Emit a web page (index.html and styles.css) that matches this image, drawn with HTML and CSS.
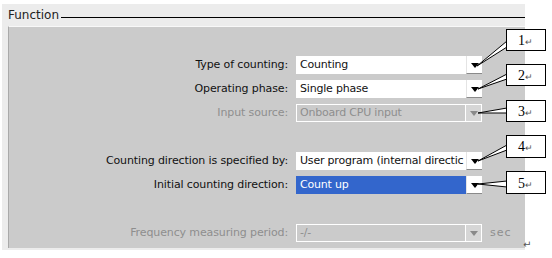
FILE: index.html
```html
<!DOCTYPE html>
<html lang="en">
<head>
    <meta charset="UTF-8">
    <title>Function</title>
    <link rel="stylesheet" href="styles.css">
</head>
<body>

    <div class="panel">
        <div class="panel-head">
            <span class="panel-title">Function</span>
            <span class="panel-rule"></span>
        </div>
        <div class="panel-body">
            <div class="form">
                <label>Type of counting:</label>
                <div class="combo"><span class="combo-text">Counting</span><span class="combo-btn"></span></div>
                <span></span>

                <label>Operating phase:</label>
                <div class="combo"><span class="combo-text">Single phase</span><span class="combo-btn"></span></div>
                <span></span>

                <label class="off">Input source:</label>
                <div class="combo off"><span class="combo-text">Onboard CPU input</span><span class="combo-btn"></span></div>
                <span></span>

                <div class="spacer"></div>

                <label>Counting direction is specified by:</label>
                <div class="combo"><span class="combo-text">User program (internal directic</span><span class="combo-btn"></span></div>
                <span></span>

                <label>Initial counting direction:</label>
                <div class="combo sel"><span class="combo-text">Count up</span><span class="combo-btn"></span></div>
                <span></span>

                <div class="spacer"></div>

                <label class="off">Frequency measuring period:</label>
                <div class="combo off"><span class="combo-text">-/-</span><span class="combo-btn"></span></div>
                <span class="unit">sec</span>
            </div>
        </div>
    </div>

    <span class="para-mark">&#8629;</span>

    <!-- numbered callouts drawn over the form -->
    <svg class="callouts" width="552" height="258" viewBox="0 0 552 258">
        <g fill="#fff" stroke="#000" stroke-width="1">
            <polygon points="507,41 477,66 507,47"/>
            <rect x="506.5" y="29.5" width="39" height="21"/>
            <polygon points="507,74 478,89 507,79"/>
            <rect x="506.5" y="64.5" width="39" height="21"/>
            <polygon points="507,108 478,113 507,113"/>
            <rect x="506.5" y="100.5" width="39" height="21"/>
            <polygon points="507,145 478,161 507,150"/>
            <rect x="506.5" y="135.5" width="39" height="22"/>
            <polygon points="507,181 478,184 507,187"/>
            <rect x="506.5" y="171.5" width="39" height="22"/>
        </g>
        <g class="callout-num">
            <text x="518" y="45">1<tspan class="ret">&#8629;</tspan></text>
            <text x="518" y="80">2<tspan class="ret">&#8629;</tspan></text>
            <text x="518" y="116">3<tspan class="ret">&#8629;</tspan></text>
            <text x="518" y="151">4<tspan class="ret">&#8629;</tspan></text>
            <text x="518" y="188">5<tspan class="ret">&#8629;</tspan></text>
        </g>
    </svg>

</body>
</html>
```

FILE: styles.css
```css
html, body {
    margin: 0;
    padding: 0;
    background: #fff;
    font-family: "DejaVu Sans", sans-serif;
    overflow: hidden;
}
.panel {
    margin: 4px 0 0 2px;
    width: 523px;
    height: 246px;
    background: #ececec;
}
.panel-head {
    display: flex;
    align-items: flex-end;
    height: 19px;
    padding-left: 6px;
}
.panel-title {
    font-size: 12px;
    color: #222;
    line-height: 15px;
}
.panel-rule {
    flex: 1;
    border-bottom: 1px solid #000;
    margin: 0 0 5px 2px;
}
.panel-body {
    margin: 3px 0 0 6px;
    height: 222px;
    background: #cbcbcb;
    border-top: 1px solid #f8f8f8;
    border-left: 1px solid #a9a9a9;
    padding-top: 29px;
    box-sizing: border-box;
}
.form {
    display: grid;
    grid-template-columns: 280px 186px auto;
    grid-auto-rows: 18px;
    row-gap: 6px;
    column-gap: 8px;
    margin-left: -1px;
}
.form label {
    font-size: 11px;
    color: #111;
    text-align: right;
    line-height: 18px;
    white-space: nowrap;
    letter-spacing: -0.12px;
}
.form label.off {
    color: #8e8e8e;
}
.spacer {
    grid-column: 1 / 4;
}
.combo {
    display: flex;
    background: #fff;
    height: 18px;
    overflow: hidden;
}
.combo-text {
    flex: 1;
    font-size: 11px;
    line-height: 18px;
    padding-left: 4px;
    color: #111;
    white-space: nowrap;
    overflow: hidden;
    letter-spacing: -0.2px;
}
.combo-btn {
    width: 16px;
    position: relative;
    background: #fff;
    border-left: 1px solid #e4e4e4;
    border-bottom: 1px solid #8a8a8a;
    box-sizing: border-box;
}
.combo-btn::after {
    content: "";
    position: absolute;
    left: 4px;
    top: 7px;
    border-left: 4px solid transparent;
    border-right: 4px solid transparent;
    border-top: 5px solid #000;
}
.combo.sel {
    background: #3366cc;
}
.combo.sel .combo-text {
    color: #fff;
}
.combo.off {
    background: #cbcbcb;
    border: 1px solid #fff;
    box-sizing: border-box;
}
.combo.off .combo-text {
    color: #8e8e8e;
    line-height: 16px;
    padding-left: 3px;
}
.combo.off .combo-btn {
    background: #d6d6d6;
    border-left: 1px solid #fff;
    border-bottom: none;
}
.combo.off .combo-btn::after {
    top: 6px;
    border-top-color: #8a8a8a;
}
.unit {
    font-size: 11px;
    color: #8e8e8e;
    line-height: 18px;
    letter-spacing: 1px;
}
.para-mark {
    position: absolute;
    left: 523px;
    top: 239px;
    font-size: 10px;
    color: #555;
}
.callouts {
    position: absolute;
    left: 0;
    top: 0;
}
.callout-num text {
    font-family: "Liberation Serif", serif;
    font-size: 14px;
    fill: #000;
}
.callout-num .ret {
    font-size: 9px;
    fill: #555;
}
```
